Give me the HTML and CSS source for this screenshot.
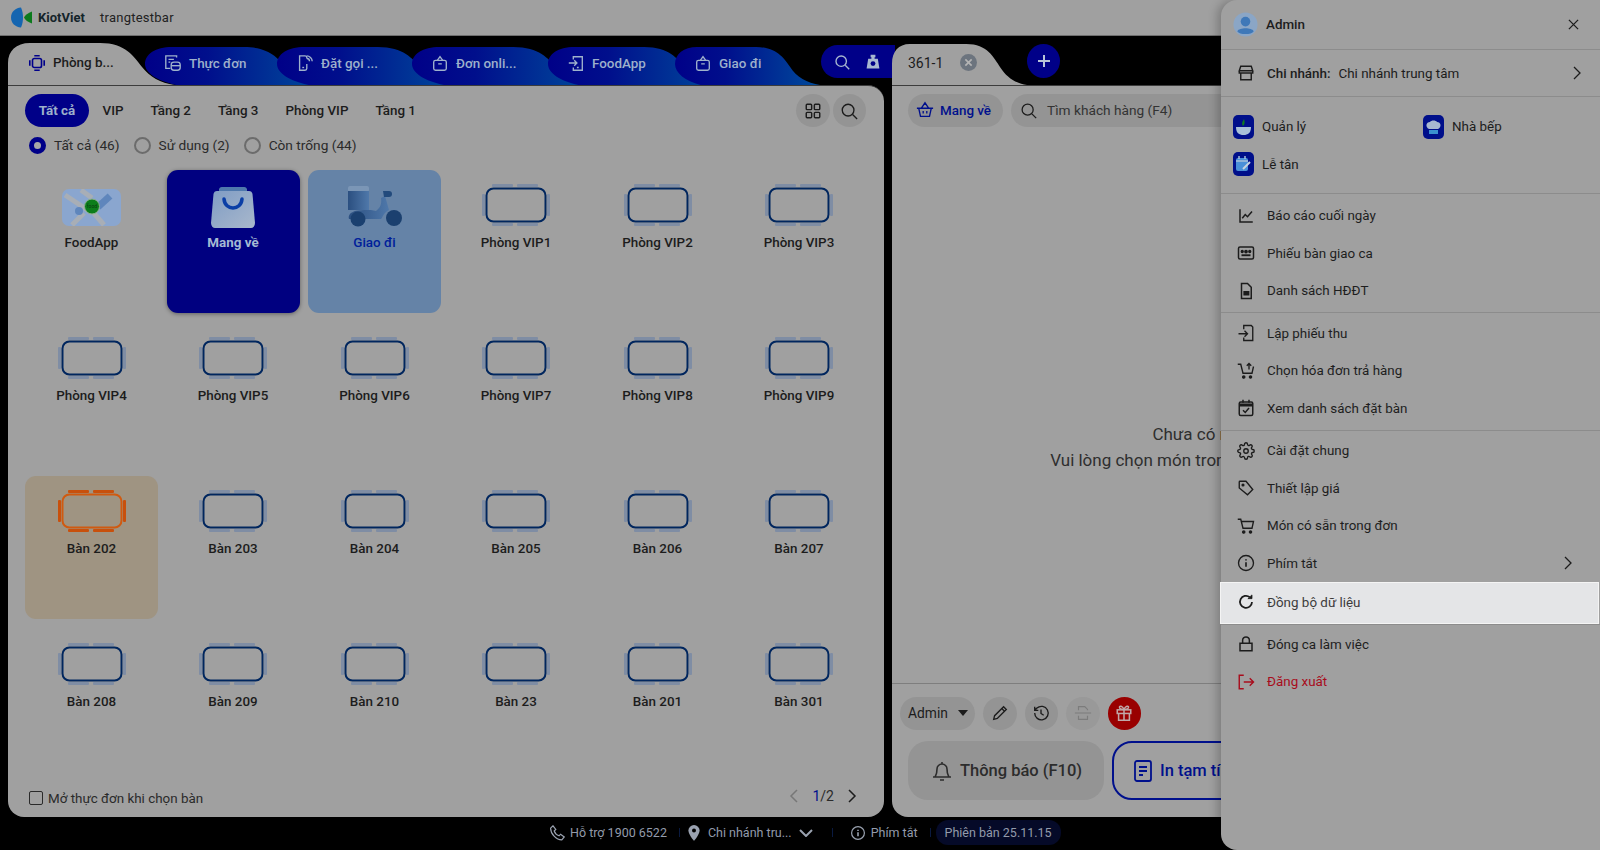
FILE: index.html
```html
<!DOCTYPE html>
<html lang="vi">
<head>
<meta charset="utf-8">
<title>KiotViet</title>
<link rel="stylesheet" href="styles.css">
</head>
<body>
<svg class="defs" aria-hidden="true">
  <defs>
    <linearGradient id="tabgrad" x1="0" x2="1" y1="0" y2="0"><stop offset="0" stop-color="#000088"/><stop offset=".35" stop-color="#000f8c"/><stop offset="1" stop-color="#004c9c"/></linearGradient>
    <linearGradient id="baggrad" x1="0" x2="1" y1="0" y2="1"><stop offset="0" stop-color="#7f9cc4"/><stop offset="1" stop-color="#a9b8cc"/></linearGradient>
    <linearGradient id="motograd" x1="0" x2="1" y1="0" y2="0"><stop offset="0" stop-color="#2b4f80"/><stop offset="1" stop-color="#4f78aa"/></linearGradient>
    <symbol id="table" viewBox="0 0 68 42">
      <rect x="4.5" y="4.5" width="59" height="33" rx="7" fill="none" stroke="var(--table)" stroke-width="2"/>
      <g fill="var(--chair)">
        <rect x="10" y="0" width="21" height="3" rx="1"/><rect x="35" y="0" width="21" height="3" rx="1"/>
        <rect x="10" y="39" width="21" height="3" rx="1"/><rect x="35" y="39" width="21" height="3" rx="1"/>
        <rect x="0" y="10" width="3" height="22" rx="1"/><rect x="65" y="10" width="3" height="22" rx="1"/>
      </g>
    </symbol>
    <path id="tabshape" d="M30 38C12 34 0 26 0 17 0 7 10 0 26 0H95C120 0 128 12 135 20 142 30 155 36 170 38Z"/>
  </defs>
</svg>

<header class="topbar">
  <svg class="logo" viewBox="0 0 22 21"><path d="M10 0.500C4 1 0 5 0 10.500S4 20 10 20.500C11.500 17 12 14 12 10.500S11.500 4 10 0.500Z" fill="#1565b0"/><path d="M21 4.500V16.500C17 15 14 13 13 10.500 14 8 17 6 21 4.500Z" fill="#0c7a1c"/></svg>
  <span class="brand">KiotViet</span>
  <span class="shop">trangtestbar</span>
</header>

<main class="workspace">
  <section class="left-col">
    <nav class="tabstrip">
      <div class="tab tab-active">
        <svg class="tab-bg" viewBox="0 0 167 42" preserveAspectRatio="none"><path d="M0 42V20C0 8 8 0 22 0H92C118 0 126 14 134 24 142 34 152 40 167 42Z" fill="#a0a0a0"/></svg>
        <svg class="tab-icon" viewBox="0 0 20 20" fill="none" stroke="#00008a" stroke-width="1.800"><rect x="5" y="5" width="10" height="10" rx="2"/><path d="M7 2h6M7 18h6M2 7v6M18 7v6"/></svg>
        <span>Phòng b...</span>
      </div>
      <div class="tab tab-menu">
        <svg class="tab-bg" viewBox="0 0 170 38" preserveAspectRatio="none"><use href="#tabshape" fill="url(#tabgrad)"/></svg>
        <svg class="tab-icon" viewBox="0 0 20 20" fill="none" stroke="#9fb2cc" stroke-width="1.500"><path d="M14 4V2H2v14h5"/><path d="M5 6h6M5 9h2"/><rect x="8" y="9" width="10" height="9" rx="3"/><path d="M8 13h10"/></svg>
        <span>Thực đơn</span>
      </div>
      <div class="tab tab-book">
        <svg class="tab-bg" viewBox="0 0 170 38" preserveAspectRatio="none"><use href="#tabshape" fill="url(#tabgrad)"/></svg>
        <svg class="tab-icon" viewBox="0 0 20 20" fill="none" stroke="#9fb2cc" stroke-width="1.500"><path d="M12 5V4a2 2 0 0 0-2-2H4v16h6a2 2 0 0 0 2-2v-5"/><path d="M7 15h2"/><path d="M12 2c3 0 6 3 6 6M12 5c2 0 3 1 3 3"/></svg>
        <span>Đặt gọi ...</span>
      </div>
      <div class="tab tab-online">
        <svg class="tab-bg" viewBox="0 0 170 38" preserveAspectRatio="none"><use href="#tabshape" fill="url(#tabgrad)"/></svg>
        <svg class="tab-icon" viewBox="0 0 20 20" fill="none" stroke="#9fb2cc" stroke-width="1.500"><rect x="3" y="7" width="14" height="11" rx="2"/><path d="M7 7l3-4 3 4M8 11h4"/></svg>
        <span>Đơn onli...</span>
      </div>
      <div class="tab tab-food">
        <svg class="tab-bg" viewBox="0 0 170 38" preserveAspectRatio="none"><use href="#tabshape" fill="url(#tabgrad)"/></svg>
        <svg class="tab-icon" viewBox="0 0 20 20" fill="none" stroke="#9fb2cc" stroke-width="1.500"><path d="M7 6V3h10v15H7v-3"/><path d="M2 10h9M8 7l3 3-3 3M11 15h2"/></svg>
        <span>FoodApp</span>
      </div>
      <div class="tab tab-ship">
        <svg class="tab-bg" viewBox="0 0 170 38" preserveAspectRatio="none"><use href="#tabshape" fill="url(#tabgrad)"/></svg>
        <svg class="tab-icon" viewBox="0 0 20 20" fill="none" stroke="#9fb2cc" stroke-width="1.500"><rect x="3" y="7" width="14" height="11" rx="2"/><path d="M7 7l3-4 3 4M8 11h4"/></svg>
        <span>Giao đi</span>
      </div>
      <div class="tools">
        <svg class="tool-icon" viewBox="0 0 20 20" fill="none" stroke="#a8b8d0" stroke-width="1.700"><circle cx="9" cy="9" r="6.500"/><path d="M14 14l5 5"/></svg>
        <svg class="tool-icon" viewBox="0 0 20 20"><path d="M7 1h6v3h-1v2h4l2 12H2L4 6h4V4H7Z" fill="#a8b8d0"/><circle cx="10" cy="12" r="3" fill="#000088"/></svg>
      </div>
    </nav>

    <div class="panel panel-tables">
      <div class="subtabs">
        <span class="subtab subtab-on">Tất cả</span>
        <span class="subtab">VIP</span>
        <span class="subtab">Tầng 2</span>
        <span class="subtab">Tầng 3</span>
        <span class="subtab">Phòng VIP</span>
        <span class="subtab">Tầng 1</span>
        <span class="subtab-tools">
          <span class="round-btn"><svg viewBox="0 0 20 20" fill="none" stroke="#1c1c1c" stroke-width="1.600"><rect x="2.500" y="2.500" width="6" height="6" rx="1"/><rect x="11.500" y="2.500" width="6" height="6" rx="1"/><rect x="2.500" y="11.500" width="6" height="6" rx="1"/><rect x="11.500" y="11.500" width="6" height="6" rx="1"/></svg></span>
          <span class="round-btn"><svg viewBox="0 0 20 20" fill="none" stroke="#1c1c1c" stroke-width="1.500"><circle cx="9" cy="9" r="6.500"/><path d="M14 14l5 5"/></svg></span>
        </span>
      </div>
      <div class="filters">
        <span class="radio radio-on"></span><span class="filter-label">Tất cả (46)</span>
        <span class="radio"></span><span class="filter-label">Sử dụng (2)</span>
        <span class="radio"></span><span class="filter-label">Còn trống (44)</span>
      </div>
      <div class="grid">
        <div class="cell">
          <svg class="map-icon" viewBox="0 0 59 37"><rect width="59" height="37" rx="7" fill="#8aa6cf"/><path d="M3 6L30 24M19 1L30 9M10 36L22 24M30 22L42 36" stroke="#a8aeb6" stroke-width="5" fill="none"/><path d="M36 18L48 7" stroke="#5f86bc" stroke-width="7"/><circle cx="17" cy="22" r="4" fill="#5f86bc"/><circle cx="30" cy="17.500" r="7.500" fill="#0c7d1a" stroke="#8fb090"/><text class="map-text" x="30" y="19" text-anchor="middle">food</text></svg>
          <span class="cell-name">FoodApp</span>
        </div>
        <div class="cell cell-takeaway">
          <svg class="bag-icon" viewBox="0 0 44 42"><path d="M8 3a3 3 0 0 1 3-2h22a3 3 0 0 1 3 2v3H8Z" fill="#4f78ac"/><path d="M6 5h32c2 0 3 1 3.500 3L44 37c0 3-2 5-4 5H4c-2 0-4-2-4-5L2.500 8C3 6 4 5 6 5Z" fill="url(#baggrad)"/><path d="M13 13c1 12 17 12 18 0" fill="none" stroke="#0a3ea6" stroke-width="3.500" stroke-linecap="round"/></svg>
          <span class="cell-name">Mang về</span>
        </div>
        <div class="cell cell-delivery">
          <svg class="moto-icon" viewBox="0 0 55 41"><rect x="1" y="0" width="21" height="6" rx="2" fill="#7b96b6"/><rect x="1" y="5" width="21" height="19" fill="url(#motograd)"/><path d="M6 26C8 24 20 24 24 24L29 25C33 22 35 18 34 12L38 10 42 24C36 27 36 31 34 33H2C1 30 3 27 6 26Z" fill="url(#motograd)"/><path d="M36 5h6a3 3 0 0 1 0 6h-5Z" fill="#224a7c"/><circle cx="11" cy="33" r="7.500" fill="#1b406f"/><circle cx="47" cy="32" r="8" fill="#1b406f"/></svg>
          <span class="cell-name">Giao đi</span>
        </div>
        <div class="cell"><svg class="table-icon"><use href="#table"/></svg><span class="cell-name">Phòng VIP1</span></div>
        <div class="cell"><svg class="table-icon"><use href="#table"/></svg><span class="cell-name">Phòng VIP2</span></div>
        <div class="cell"><svg class="table-icon"><use href="#table"/></svg><span class="cell-name">Phòng VIP3</span></div>
        <div class="cell"><svg class="table-icon"><use href="#table"/></svg><span class="cell-name">Phòng VIP4</span></div>
        <div class="cell"><svg class="table-icon"><use href="#table"/></svg><span class="cell-name">Phòng VIP5</span></div>
        <div class="cell"><svg class="table-icon"><use href="#table"/></svg><span class="cell-name">Phòng VIP6</span></div>
        <div class="cell"><svg class="table-icon"><use href="#table"/></svg><span class="cell-name">Phòng VIP7</span></div>
        <div class="cell"><svg class="table-icon"><use href="#table"/></svg><span class="cell-name">Phòng VIP8</span></div>
        <div class="cell"><svg class="table-icon"><use href="#table"/></svg><span class="cell-name">Phòng VIP9</span></div>
        <div class="cell cell-busy"><svg class="table-icon"><use href="#table"/></svg><span class="cell-name">Bàn 202</span></div>
        <div class="cell"><svg class="table-icon"><use href="#table"/></svg><span class="cell-name">Bàn 203</span></div>
        <div class="cell"><svg class="table-icon"><use href="#table"/></svg><span class="cell-name">Bàn 204</span></div>
        <div class="cell"><svg class="table-icon"><use href="#table"/></svg><span class="cell-name">Bàn 205</span></div>
        <div class="cell"><svg class="table-icon"><use href="#table"/></svg><span class="cell-name">Bàn 206</span></div>
        <div class="cell"><svg class="table-icon"><use href="#table"/></svg><span class="cell-name">Bàn 207</span></div>
        <div class="cell"><svg class="table-icon"><use href="#table"/></svg><span class="cell-name">Bàn 208</span></div>
        <div class="cell"><svg class="table-icon"><use href="#table"/></svg><span class="cell-name">Bàn 209</span></div>
        <div class="cell"><svg class="table-icon"><use href="#table"/></svg><span class="cell-name">Bàn 210</span></div>
        <div class="cell"><svg class="table-icon"><use href="#table"/></svg><span class="cell-name">Bàn 23</span></div>
        <div class="cell"><svg class="table-icon"><use href="#table"/></svg><span class="cell-name">Bàn 201</span></div>
        <div class="cell"><svg class="table-icon"><use href="#table"/></svg><span class="cell-name">Bàn 301</span></div>
      </div>
      <div class="panel-foot">
        <span class="checkbox"></span>
        <span class="foot-label">Mở thực đơn khi chọn bàn</span>
        <span class="pager">
          <svg class="pager-arrow pager-off" viewBox="0 0 10 16" fill="none" stroke-width="1.500"><path d="M8 2L2 8l6 6"/></svg>
          <span class="pager-num"><b>1</b>/2</span>
          <svg class="pager-arrow" viewBox="0 0 10 16" fill="none" stroke-width="1.500"><path d="M2 2l6 6-6 6"/></svg>
        </span>
      </div>
    </div>
  </section>

  <section class="right-col">
    <nav class="tabstrip tabstrip-order">
      <div class="tab tab-order">
        <svg class="tab-bg" viewBox="0 0 167 42" preserveAspectRatio="none"><path d="M0 42V20C0 8 8 0 22 0H92C118 0 126 14 134 24 142 34 152 40 167 42Z" fill="#a0a0a0"/></svg>
        <span class="order-name">361-1</span>
        <span class="order-close"><svg viewBox="0 0 10 10" stroke="#b4b4b4" stroke-width="1.800"><path d="M1.500 1.500l7 7M8.500 1.500l-7 7"/></svg></span>
      </div>
      <span class="add-order"><svg viewBox="0 0 14 14" stroke="#b8c4d8" stroke-width="2"><path d="M7 1v12M1 7h12"/></svg></span>
    </nav>
    <div class="panel panel-order">
      <div class="order-head">
        <span class="mode-pill"><svg viewBox="0 0 20 20" fill="none" stroke="#00108c" stroke-width="1.500"><path d="M1 8h18M3 8l2 9h10l2-9M6 8l4-6 4 6M8 11v3M12 11v3"/></svg>Mang về</span>
        <span class="search-pill"><svg viewBox="0 0 20 20" fill="none" stroke="#1c1c1c" stroke-width="1.500"><circle cx="9" cy="9" r="6.500"/><path d="M14 14l5 5"/></svg>Tìm khách hàng (F4)</span>
      </div>
      <div class="empty">
        <p class="empty-title">Chưa có món</p>
        <p>Vui lòng chọn món trong thực đơn bên trái</p>
      </div>
      <div class="order-actions">
        <span class="staff-pill">Admin<i class="caret"></i></span>
        <span class="round-btn"><svg viewBox="0 0 20 20" fill="none" stroke="#1c1c1c" stroke-width="1.500"><path d="M3 17l1-4L14 3l3 3L7 16Z"/><path d="M12 5l3 3"/></svg></span>
        <span class="round-btn"><svg viewBox="0 0 20 20" fill="none" stroke="#1c1c1c" stroke-width="1.500"><path d="M3 10a7.500 7.500 0 1 0 2.500-5.500L3 7M3 3v4h4"/><path d="M10 6v4.500l3 2"/></svg></span>
        <span class="round-btn round-off"><svg viewBox="0 0 20 20" fill="none" stroke="#7c7c7c" stroke-width="1.300"><path d="M1 10h18M5 7V3h7l3 3v1M5 13v4h10v-4"/></svg></span>
        <span class="round-btn round-gift"><svg viewBox="0 0 20 20" fill="none" stroke="#c0a8a8" stroke-width="1.700"><rect x="2.500" y="6.500" width="15" height="4"/><path d="M4 10.500V18h12v-7.500M10 6.500V18M10 6C7 6 5 5 5 3.500S8 1.500 10 6c2-4.500 5-4 5-2.500S13 6 10 6Z"/></svg></span>
      </div>
      <div class="order-buttons">
        <span class="big-btn big-notify"><svg viewBox="0 0 24 24" fill="none" stroke="#2c2c2c" stroke-width="1.600"><path d="M5 18c1-2 2-3 2-8a5 5 0 0 1 10 0c0 5 1 6 2 8ZM3 18h18M10 21h4M12 3v2"/></svg>Thông báo (F10)</span>
        <span class="big-btn big-print"><svg viewBox="0 0 24 24" fill="none" stroke="#00108c" stroke-width="1.800"><rect x="4" y="2" width="16" height="20" rx="2"/><path d="M8 8h8M8 12h8M8 16h4"/></svg>In tạm tính</span>
      </div>
    </div>
  </section>
</main>

<footer class="statusbar">
  <svg class="st-icon" viewBox="0 0 20 20" fill="none" stroke="#9aa2b0" stroke-width="1.500"><path d="M2 4l3-3 3.500 4.500-2 2c1 3 3 5 6 6l2-2L19 15l-3 3.500C9 18.500 2 11 2 4Z"/></svg>
  <span class="st-text">Hỗ trợ 1900 6522</span>
  <i class="st-sep st-sep-first"></i>
  <svg class="st-icon st-pin" viewBox="0 0 16 20"><path d="M8 0a7 7 0 0 0-7 7c0 5 7 13 7 13s7-8 7-13a7 7 0 0 0-7-7Z" fill="#9aa2b0"/><circle cx="8" cy="7" r="2.500" fill="#000"/></svg>
  <span class="st-text">Chi nhánh tru...</span>
  <svg class="st-chev" viewBox="0 0 14 8" fill="none" stroke="#9aa2b0" stroke-width="2"><path d="M1 1l6 6 6-6"/></svg>
  <i class="st-sep st-sep-wide"></i>
  <svg class="st-icon" viewBox="0 0 20 20" fill="none" stroke="#9aa2b0" stroke-width="1.500"><circle cx="10" cy="10" r="8"/><path d="M10 9v5M10 6v1.500" stroke-width="2"/></svg>
  <span class="st-text">Phím tắt</span>
  <i class="st-sep"></i>
  <span class="st-version">Phiên bản 25.11.15</span>
</footer>

<aside class="drawer">
  <div class="dr-head">
    <svg class="avatar" viewBox="0 0 26 26"><circle cx="13" cy="13" r="12.500" fill="#8ba6c6"/><circle cx="13" cy="10" r="5" fill="#3f78b8"/><path d="M4.500 20c2-4 15-4 17 0-2 4-15 4-17 0Z" fill="#3f78b8"/></svg>
    <span class="dr-name">Admin</span>
    <svg class="dr-close" viewBox="0 0 12 12" stroke="#1c1c1c" stroke-width="1.400"><path d="M1 1l10 10M11 1L1 11"/></svg>
  </div>
  <div class="dr-branch">
    <svg class="dr-icon" viewBox="0 0 24 24" fill="none" stroke="#1c1c1c" stroke-width="1.900"><path d="M5 3h14l2 6H3ZM3 9v3h18V9M5 12v9h14v-9"/></svg>
    <b>Chi nhánh:</b><span class="dr-branch-name">Chi nhánh trung tâm</span>
    <svg class="dr-chev" viewBox="0 0 10 16" fill="none" stroke="#1c1c1c" stroke-width="1.300"><path d="M2 2l6 6-6 6"/></svg>
  </div>
  <div class="dr-apps">
    <span class="app"><svg class="app-icon" viewBox="0 0 21 24"><rect width="21" height="24" rx="5" fill="#000f8a"/><path d="M3 12h15c0 6-3 8-7.500 8S3 18 3 12Z" fill="#a8c0d8"/><path d="M10 11c-2-3 0-5 1-7 1 3 1 5-1 7Z" fill="#0f7a20"/></svg>Quản lý</span>
    <span class="app"><svg class="app-icon" viewBox="0 0 21 24"><rect width="21" height="24" rx="5" fill="#000f8a"/><path d="M6 14C2 12 3 7 7 7c1-2 6-2 7 0 4 0 5 5 1 7Z" fill="#a8b8d0"/><rect x="6" y="15" width="9" height="4" fill="#3a90d0"/></svg>Nhà bếp</span>
    <span class="app"><svg class="app-icon" viewBox="0 0 21 24"><rect width="21" height="24" rx="5" fill="#000f8a"/><rect x="3" y="6" width="12" height="13" rx="2" fill="#4a90d8"/><path d="M3 9h12M6 4v3M12 4v3" stroke="#a8c0d8" stroke-width="1.500"/><path d="M10 17l7-7" stroke="#c8d4e0" stroke-width="2"/></svg>Lễ tân</span>
  </div>
  <div class="dr-section dr-reports">
    <div class="dr-row"><svg class="dr-icon" viewBox="0 0 24 24" fill="none" stroke="#1c1c1c" stroke-width="2"><path d="M4 3v17h17M7 15l4-5 3 3 6-7"/></svg>Báo cáo cuối ngày</div>
    <div class="dr-row"><svg class="dr-icon" viewBox="0 0 24 24" fill="none" stroke="#1c1c1c" stroke-width="2"><rect x="2" y="4" width="20" height="16" rx="2"/><circle cx="12" cy="10" r="1.500" fill="#1c1c1c"/><circle cx="7" cy="10" r="1.200" fill="#1c1c1c"/><circle cx="17" cy="10" r="1.200" fill="#1c1c1c"/><path d="M6 15h12" stroke-width="2.500"/></svg>Phiếu bàn giao ca</div>
    <div class="dr-row"><svg class="dr-icon" viewBox="0 0 24 24" fill="none" stroke="#1c1c1c" stroke-width="2"><path d="M6 2h8l5 5v15H6Z"/><rect x="8.500" y="12" width="8" height="6" fill="#1c1c1c" stroke="none"/></svg>Danh sách HĐĐT</div>
  </div>
  <div class="dr-section">
    <div class="dr-row"><svg class="dr-icon" viewBox="0 0 24 24" fill="none" stroke="#1c1c1c" stroke-width="1.800"><path d="M9 7V2h10l2 2v18H9v-4"/><path d="M2 13h12M10 9l4 4-4 4"/></svg>Lập phiếu thu</div>
    <div class="dr-row"><svg class="dr-icon" viewBox="0 0 24 24" fill="none" stroke="#1c1c1c" stroke-width="1.800"><path d="M1 3h4l3 12h12l2-9M16 10V2M13 5l3-3 3 3"/><circle cx="9" cy="20" r="1.500" fill="#1c1c1c"/><circle cx="18" cy="20" r="1.500" fill="#1c1c1c"/></svg>Chọn hóa đơn trả hàng</div>
    <div class="dr-row"><svg class="dr-icon" viewBox="0 0 24 24" fill="none" stroke="#1c1c1c" stroke-width="2"><rect x="3" y="4" width="18" height="18" rx="2"/><path d="M3 8h18" stroke-width="4"/><path d="M8 1v4M16 1v4M8 15l3 3 5-6"/></svg>Xem danh sách đặt bàn</div>
  </div>
  <div class="dr-section dr-settings">
    <div class="dr-row"><svg class="dr-icon" viewBox="0 0 24 24" fill="none" stroke="#1c1c1c" stroke-width="1.800"><circle cx="12" cy="12" r="3"/><path d="M19.400 15a1.650 1.650 0 0 0 .33 1.820l.06.06a2 2 0 0 1 0 2.830 2 2 0 0 1-2.830 0l-.06-.06a1.650 1.650 0 0 0-1.820-.33 1.650 1.650 0 0 0-1 1.510V21a2 2 0 0 1-2 2 2 2 0 0 1-2-2v-.09A1.650 1.650 0 0 0 9 19.400a1.650 1.650 0 0 0-1.820.33l-.06.06a2 2 0 0 1-2.830 0 2 2 0 0 1 0-2.830l.06-.06a1.650 1.650 0 0 0 .33-1.820 1.650 1.650 0 0 0-1.510-1H3a2 2 0 0 1-2-2 2 2 0 0 1 2-2h.09A1.650 1.650 0 0 0 4.600 9a1.650 1.650 0 0 0-.33-1.820l-.06-.06a2 2 0 0 1 0-2.830 2 2 0 0 1 2.830 0l.06.06a1.650 1.650 0 0 0 1.820.33H9a1.650 1.650 0 0 0 1-1.510V3a2 2 0 0 1 2-2 2 2 0 0 1 2 2v.09a1.650 1.650 0 0 0 1 1.510 1.650 1.650 0 0 0 1.820-.33l.06-.06a2 2 0 0 1 2.830 0 2 2 0 0 1 0 2.830l-.06.06a1.650 1.650 0 0 0-.33 1.820V9a1.650 1.650 0 0 0 1.510 1H21a2 2 0 0 1 2 2 2 2 0 0 1-2 2h-.09a1.650 1.650 0 0 0-1.510 1z"/></svg>Cài đặt chung</div>
    <div class="dr-row"><svg class="dr-icon" viewBox="0 0 24 24" fill="none" stroke="#1c1c1c" stroke-width="1.800"><path d="M3 4a1 1 0 0 1 1-1h8l9 11-7 7L3 12Z"/><circle cx="8" cy="8" r="1.200" fill="#1c1c1c"/></svg>Thiết lập giá</div>
    <div class="dr-row"><svg class="dr-icon" viewBox="0 0 24 24" fill="none" stroke="#1c1c1c" stroke-width="1.800"><path d="M1 3h4l3 12h12l2-9H6"/><circle cx="9" cy="20" r="1.500" fill="#1c1c1c"/><circle cx="18" cy="20" r="1.500" fill="#1c1c1c"/></svg>Món có sẵn trong đơn</div>
    <div class="dr-row"><svg class="dr-icon" viewBox="0 0 24 24" fill="none" stroke="#1c1c1c" stroke-width="1.800"><circle cx="12" cy="12" r="10"/><path d="M12 11v6M12 7v1.800" stroke-width="2.200"/></svg>Phím tắt<svg class="dr-chev dr-chev-row" viewBox="0 0 10 16" fill="none" stroke="#1c1c1c" stroke-width="1.300"><path d="M2 2l6 6-6 6"/></svg></div>
    <div class="dr-row dr-spot"><svg class="dr-icon" viewBox="0 0 24 24" fill="none" stroke="#1c1c1c" stroke-width="2.400"><path d="M20 12a8 8 0 1 1-3-6.500"/><path d="M20 2.500V7.500H14.500Z" fill="#1c1c1c" stroke-width="1"/></svg>Đồng bộ dữ liệu</div>
  </div>
  <div class="dr-section dr-last">
    <div class="dr-row"><svg class="dr-icon" viewBox="0 0 24 24" fill="none" stroke="#1c1c1c" stroke-width="2"><rect x="4" y="11" width="16" height="10"/><path d="M7.500 11V7a4.500 4.500 0 0 1 9 0v4"/></svg>Đóng ca làm việc</div>
    <div class="dr-row dr-danger"><svg class="dr-icon" viewBox="0 0 24 24" fill="none" stroke="#a80c1c" stroke-width="1.900"><path d="M9 3H3v18h6M9 12h13M17 7l5 5-5 5"/></svg>Đăng xuất</div>
  </div>
</aside>
</body>
</html>
```

FILE: styles.css
```css
* { box-sizing: border-box; }
html, body { height: 100%; }
body {
  margin: 0;
  width: 1600px;
  height: 850px;
  overflow: hidden;
  position: relative;
  display: flex;
  flex-direction: column;
  background: #000;
  color: #1c1c1c;
  font-family: Roboto, "Liberation Sans", sans-serif;
  font-size: 13.4px;
}
.defs { position: absolute; width: 0; height: 0; }

/* top bar */
.topbar {
  height: 36px;
  flex: none;
  display: flex;
  align-items: center;
  padding-left: 11px;
  background: #a0a0a0;
  border-bottom: 1px solid #6e6e6e;
}
.logo { width: 22px; height: 21px; margin-top: -1px; }
.brand { margin-left: 5px; font-weight: 700; font-size: 13px; color: #14242a; width: 62px; }
.shop { font-size: 13px; letter-spacing: .25px; color: #222; }

/* columns */
.workspace { flex: 1; display: flex; gap: 8px; padding: 0 8px; min-height: 0; }
.left-col { width: 876px; flex: none; display: flex; flex-direction: column; }
.right-col { flex: 1; display: flex; flex-direction: column; position: relative; min-width: 0; }

/* tabs */
.tabstrip { height: 49px; flex: none; display: flex; align-items: flex-end; }
.tab {
  position: relative;
  height: 38px;
  flex: none;
  display: flex;
  align-items: center;
  gap: 7px;
  padding: 0 0 6px 19px;
  margin-left: -45px;
  font-weight: 500;
  color: #9db0cb;
}
.tab-bg { position: absolute; inset: 0; width: 100%; height: 100%; }
.tab > *:not(.tab-bg) { position: relative; }
.tab-icon { width: 18px; height: 18px; flex: none; }
.tab-active { height: 42px; width: 167px; margin-left: 0; padding: 0 0 3px 20px; color: #1c1c1c; gap: 7px; }
.tab-menu { width: 177px; margin-left: -30px; }
.tab-book { width: 180px; }
.tab-online { width: 181px; }
.tab-food { width: 172px; }
.tab-ship { width: 145px; }
.tools {
  flex: none;
  position: relative;
  align-self: flex-start;
  margin-top: 9px;
  width: 74px;
  height: 33px;
  margin-left: 1px;
  border-radius: 17px 0 0 17px;
  background: #000088;
  display: flex;
  align-items: center;
  gap: 15px;
  padding-left: 13px;
}
.tool-icon { width: 16px; height: 16px; }
.tabstrip-order { position: relative; align-items: flex-start; padding-top: 8px; }
.tab-order { width: 135px; height: 41px; margin-left: 0; padding: 0 0 3px 16px; color: #1c1c1c; font-weight: 400; font-size: 14px; gap: 0; }
.order-name { width: 52px; }
.order-close {
  width: 17px; height: 17px; border-radius: 50%;
  background: #6c747e;
  display: flex; align-items: center; justify-content: center;
  margin-top: -1px;
}
.order-close svg { width: 9px; height: 9px; }
.add-order {
  width: 33px; height: 34px; border-radius: 50%;
  background: #000088;
  display: flex; align-items: center; justify-content: center;
  flex: none;
}
.add-order svg { width: 14px; height: 14px; }

/* panels */
.panel {
  flex: 1;
  background: #a0a0a0;
  border-top: 1px solid #3c3c3c;
  display: flex;
  flex-direction: column;
  min-height: 0;
}
.panel-tables { padding: 8px 18px 0 17px; border-radius: 0 16px 16px 16px; position: relative; }
.subtabs { height: 33px; display: flex; align-items: center; font-weight: 500; }
.subtab { padding: 0 13.5px; line-height: 33px; height: 33px; border-radius: 17px; white-space: nowrap; }
.subtab-on { background: #000088; color: #9db0cb; font-weight: 700; padding: 0; width: 64px; text-align: center; }
.subtab-tools { margin-left: auto; display: flex; gap: 3px; }
.round-btn {
  width: 33.5px; height: 33px; border-radius: 50%;
  background: #949494;
  display: flex; align-items: center; justify-content: center;
  flex: none;
}
.round-btn svg { width: 18px; height: 18px; }
.filters { display: flex; align-items: center; height: 20px; margin-top: 8px; margin-bottom: 1px; padding-left: 4px; color: #2a2a2a; font-size: 13.7px; }
.radio { width: 17px; height: 17px; border-radius: 50%; border: 2px solid #6c6c6c; flex: none; margin-right: 8px; }
.radio-on { border: 5px solid #000088; background: #a8a8a8; }
.filter-label { margin-right: 14px; }
.grid {
  margin-top: 14px;
  display: grid;
  grid-template-columns: repeat(6, 133px);
  grid-auto-rows: 143px;
  column-gap: 8.5px;
  row-gap: 10px;
}
.cell {
  --table: #00265e;
  --chair: #7f8da4;
  display: flex;
  flex-direction: column;
  align-items: center;
  border-radius: 11px;
  padding-top: 14px;
  font-weight: 500;
}
.cell-name { position: absolute; margin-top: 51px; line-height: 16px; }
.table-icon { width: 68px; height: 42px; flex: none; }
.map-icon { width: 59px; height: 37px; margin-top: 5px; flex: none; }
.map-text { font: 5px Roboto, sans-serif; fill: #0a3a10; }
.bag-icon { width: 44px; height: 42px; margin-top: 2px; flex: none; }
.moto-icon { width: 55px; height: 41px; margin-top: 2px; flex: none; }
.cell-takeaway { background: #000080; color: #a4bad4; box-shadow: 0 1px 4px rgba(0,0,0,.4); font-weight: 700; }
.cell-delivery { background: #6583a7; color: #00209a; }
.cell-busy { background: #9f9482; --table: #d05a10; --chair: #c8500c; }
.panel-foot { margin-top: auto; height: 30px; display: flex; align-items: flex-start; color: #2a2a2a; }
.checkbox { width: 14px; height: 14px; margin: 4px 0 0 4px; border: 1.500px solid #2a2a2a; border-radius: 2px; flex: none; }
.foot-label { margin: 4px 0 0 5px; }
.pager { margin-left: auto; margin-right: 9px; margin-top: 1px; display: flex; align-items: center; gap: 13px; line-height: 16px; font-size: 14px; }
.pager-arrow { width: 10px; height: 16px; stroke: #1c1c1c; }
.pager-off { stroke: #777; }
.pager-num b { font-weight: 400; color: #00108c; }

/* order panel */
.panel-order { padding: 8px 0 0; border-radius: 0 0 0 16px; }
.order-head { display: flex; gap: 8px; padding: 0 16px; height: 33px; flex: none; }
.mode-pill {
  width: 95px; height: 33px; border-radius: 17px; background: #949494;
  display: flex; align-items: center; gap: 6px; padding: 0 0 1px 8px;
  color: #00108c; font-weight: 500;
}
.mode-pill svg { width: 18px; height: 18px; }
.search-pill {
  flex: 1; height: 33px; border-radius: 17px; background: #949494; font-size: 13.7px;
  display: flex; align-items: center; gap: 10px; padding: 0 0 1px 9px; color: #333;
}
.search-pill svg { width: 17px; height: 17px; }
.empty { flex: 1; display: flex; flex-direction: column; align-items: center; justify-content: center; font-size: 17px; line-height: 25.5px; color: #2e2e2e; padding: 85px 66px 0 0; }
.empty p { margin: 0; white-space: nowrap; }
.empty-title { padding-right: 12px; }
.order-actions {
  flex: none;
  display: flex;
  align-items: center;
  gap: 8px;
  height: 47px;
  padding: 12px 8px 0;
  border-top: 1px solid #7e7e7e;
}
.staff-pill { width: 75px; height: 33px; border-radius: 17px; background: #949494; display: flex; align-items: center; padding-left: 8px; gap: 10px; font-size: 13.8px; }
.caret { width: 0; height: 0; border: 5px solid transparent; border-top: 6px solid #1c1c1c; border-bottom: 0; }
.round-off { background: #999; }
.round-gift { background: #990000; }
.order-buttons { flex: none; display: flex; gap: 8px; margin-top: 11px; padding: 0 16px; height: 59px; margin-bottom: 17px; }
.big-btn { border-radius: 20px; display: flex; align-items: center; justify-content: center; gap: 6px; font-size: 16.5px; font-weight: 500; flex: none; }
.big-btn svg { width: 24px; height: 24px; }
.big-notify { width: 196px; background: #949494; color: #2c2c2c; }
.big-print { width: 146px; gap: 5px; border: 2px solid #00108c; color: #00108c; white-space: nowrap; }

/* status bar */
.statusbar { height: 33px; flex: none; display: flex; align-items: center; padding: 0 0 2px 549px; color: #939bab; font-size: 12.5px; }
.st-icon { width: 16px; height: 16px; flex: none; margin-right: 5px; }
.st-pin { width: 14px; margin-right: 7px; }
.st-text { white-space: nowrap; }
.st-chev { width: 14px; height: 8px; margin-left: 7px; }
.st-sep { width: 1px; height: 9px; background: #0a1a40; margin: 0 10px 0 12px; }
.st-sep-first { margin-right: 7px; }
.st-sep-wide { margin: 0 17px 0 19px; }
.st-version { height: 25px; line-height: 25px; padding: 0 9px; margin-left: -5px; border-radius: 12px; background: #050a28; }

/* drawer */
.drawer {
  position: absolute;
  top: 0;
  right: 0;
  bottom: 0;
  width: 379px;
  background: #a0a0a0;
  border-radius: 16px 0 0 16px;
  box-shadow: -4px 0 10px rgba(0,0,0,.22);
  display: flex;
  flex-direction: column;
}
.dr-head { height: 50px; flex: none; display: flex; align-items: center; padding: 0 21px 0 12px; gap: 8px; font-weight: 500; border-bottom: 1px solid #8c8c8c; }
.avatar { width: 25px; height: 25px; }
.dr-name { flex: 1; }
.dr-close { width: 11px; height: 11px; }
.dr-branch { height: 47px; flex: none; display: flex; align-items: center; padding: 0 18px 0 16px; border-bottom: 1px solid #8c8c8c; }
.dr-branch b { font-weight: 500; }
.dr-branch-name { flex: 1; margin-left: 8px; }
.dr-icon { width: 18px; height: 18px; flex: none; margin-right: 12px; }
.dr-chev { width: 10px; height: 16px; margin-right: 0; }
.dr-apps {
  height: 97px;
  flex: none;
  display: grid;
  grid-template-columns: 190px 1fr;
  grid-auto-rows: 37.5px;
  padding: 11px 0 0 12px;
  border-bottom: 1px solid #8c8c8c;
}
.app { display: flex; align-items: center; gap: 8px; }
.app-icon { width: 21px; height: 24px; }
.dr-section { flex: none; padding: 2px 0 3px; border-bottom: 1px solid #8c8c8c; }
.dr-reports { padding: 3px 0 2px; }
.dr-settings { padding: 1px 0 4px; }
.dr-last { border-bottom: 0; padding-top: 0.5px; }
.dr-row { height: 37.5px; display: flex; align-items: center; padding-left: 16px; color: #1e1e1e; }
.dr-chev-row { margin-left: auto; margin-right: 27px; }
.dr-spot {
  height: 40px;
  margin: 0.5px 2px -2.5px 0;
  padding-bottom: 1px;
  background: #e4e5e7;
  box-shadow: 0 0 0 1px #f4f4f4;
  color: #3c3c3c;
}
.dr-danger { color: #a80c1c; }
```
